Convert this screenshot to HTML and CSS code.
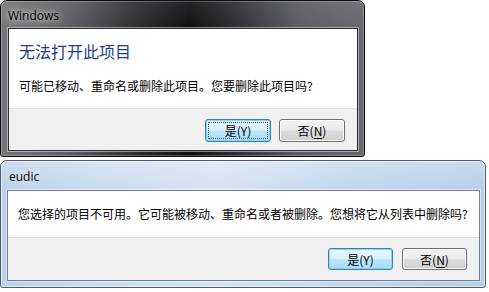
FILE: index.html
```html
<!DOCTYPE html>
<html>
<head>
<meta charset="utf-8">
<link rel="stylesheet" href="styles.css">
</head>
<body>
<div class="win win-dark">
  <div class="title">Windows</div>
  <div class="client">
    <div class="content">
      <div class="heading">无法打开此项目</div>
      <div class="msg">可能已移动、重命名或删除此项目。您要删除此项目吗?</div>
    </div>
    <div class="footer">
      <button class="btn default"><span class="focus">是(Y)</span></button>
      <button class="btn">否(<u>N</u>)</button>
    </div>
  </div>
</div>
<div class="win win-light">
  <div class="title">eudic</div>
  <div class="client">
    <div class="content">
      <div class="msg">您选择的项目不可用。它可能被移动、重命名或者被删除。您想将它从列表中删除吗?</div>
    </div>
    <div class="footer">
      <button class="btn default">是(Y)</button>
      <button class="btn">否(<u>N</u>)</button>
    </div>
  </div>
</div>
</body>
</html>
```
FILE: styles.css
```css
html, body {
  margin: 0;
  padding: 0;
  background: #ffffff;
}
body {
  width: 489px;
  height: 292px;
  overflow: hidden;
  font-family: "Noto Sans CJK SC", "Noto Sans", sans-serif;
}
.win {
  box-sizing: border-box;
  display: flex;
  flex-direction: column;
  border-radius: 7px 7px 3px 3px;
}
.win-dark {
  width: 365px;
  height: 157px;
  padding: 0 6px 5px 7px;
  border: 1px solid #0b0c0e;
  background:
    linear-gradient(to bottom, rgba(255,255,255,0.08), rgba(0,0,0,0) 30px),
    linear-gradient(to right, #74777b 0%, #5d6064 18%, #2a2c30 38%, #0e1013 52%, #2f3236 66%, #5a5d62 82%, #65686c 100%);
  box-shadow: inset 0 0 0 1px rgba(255,255,255,0.25);
}
.win-light {
  width: 486px;
  height: 128px;
  margin-top: 3px;
  padding: 0 5px 6px 6px;
  border: 1px solid #4d5a6c;
  background:
    linear-gradient(to bottom, rgba(255,255,255,0.25), rgba(255,255,255,0) 28px),
    linear-gradient(to right, #bcd2ea 0%, #c9dbef 20%, #d6e4f3 45%, #c3d7ed 70%, #b7cfe8 100%);
  box-shadow: inset 0 0 0 1px rgba(255,255,255,0.55);
}
.title {
  font-family: "Open Sans", "Noto Sans", sans-serif;
  font-size: 12px;
  color: #000;
  white-space: nowrap;
}
.win-dark .title {
  height: 27px;
  line-height: 29px;
  padding-left: 0;
  text-shadow: 0 0 6px rgba(255,255,255,0.9), 0 0 10px rgba(255,255,255,0.6);
}
.win-light .title {
  height: 29px;
  line-height: 31px;
  padding-left: 2px;
  text-shadow: 0 0 6px rgba(255,255,255,0.9);
}
.client {
  flex: 1;
  display: flex;
  flex-direction: column;
  border: 1px solid #2b2e33;
  box-shadow: 0 0 0 1px rgba(255,255,255,0.45);
  background: #f0f0f0;
}
.win-light .client {
  border-color: #6d7f96;
}
.content {
  background: #ffffff;
  border-bottom: 1px solid #dfdfdf;
  padding-left: 10px;
}
.win-dark .content {
  height: 79px;
  padding-top: 11px;
  box-sizing: border-box;
  height: 80px;
}
.win-light .content {
  box-sizing: border-box;
  height: 47px;
  padding-top: 14px;
}
.heading {
  font-size: 16px;
  line-height: 22px;
  color: #1e3c8e;
  margin-bottom: 15px;
}
.msg {
  font-size: 12px;
  line-height: 17px;
  color: #000;
  white-space: nowrap;
}
.footer {
  flex: 1;
  display: flex;
  justify-content: flex-end;
  align-items: flex-start;
  gap: 8px;
  padding-right: 12px;
  padding-top: 10px;
}
.win-light .footer {
  padding-right: 12px;
  padding-top: 10px;
  gap: 9px;
}
.btn {
  box-sizing: border-box;
  width: 66px;
  height: 23px;
  padding: 0;
  font-family: "Noto Sans CJK SC", "Noto Sans", sans-serif;
  font-size: 12px;
  line-height: 19px;
  color: #000;
  border: 1px solid #707070;
  border-radius: 3px;
  background: linear-gradient(to bottom, #f2f2f2 0%, #ebebeb 48%, #dddddd 52%, #cfcfcf 100%);
  box-shadow: inset 0 0 0 1px rgba(255,255,255,0.8);
  display: flex;
  align-items: center;
  justify-content: center;
}
.btn.default {
  border-color: #3c7fb1;
  background: linear-gradient(to bottom, #eaf6fd 0%, #d9f0fc 48%, #bee6fd 52%, #a7d9f5 100%);
  box-shadow: inset 0 0 0 1px #84d4f4;
}
.win-light .btn {
  width: 65px;
  height: 22px;
}
.focus {
  display: flex;
  align-items: center;
  justify-content: center;
  width: 58px;
  height: 15px;
  outline: 1px dotted #3a5878;
}
u {
  text-decoration: underline;
  text-underline-offset: 2px;
}
```
